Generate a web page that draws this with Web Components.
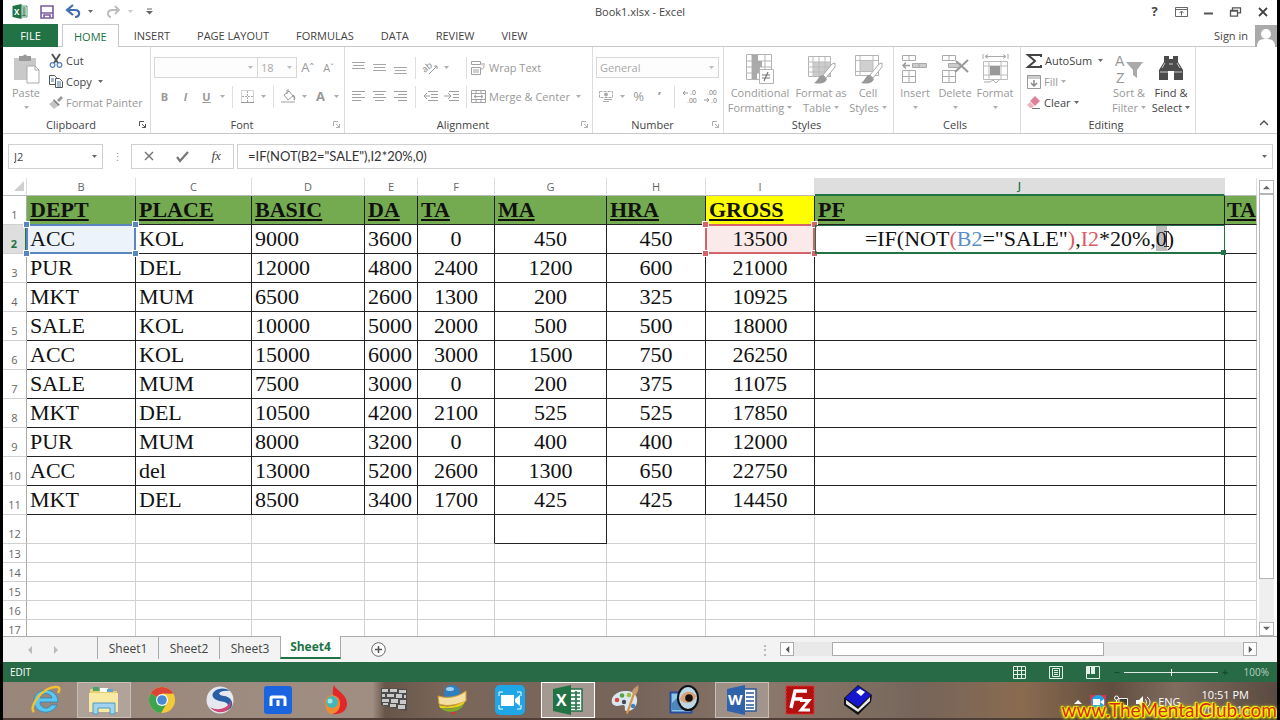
<!DOCTYPE html>
<html lang="en">
<head>
<meta charset="utf-8">
<title>Book1.xlsx - Excel</title>
<style>
	html, body { margin: 0; height: 100%; }
	body {
		background: #000;
		font: 11px/15px "Open Sans", "Noto Sans", sans-serif;
		color: #444;
		overflow: hidden;
	}
</style>
</head>
<body>
<excel-desktop></excel-desktop>

<script>
// Icon table: name -> [width, height, svg body]
const G = "#b4b4b4";
const ICONS = {
	excel: [32, 30, `<path d="M17 4h13v22H17z" fill="#fff" stroke="#217346" stroke-width="1.5"/><path d="M19 8h9M19 12h9M19 16h9M19 20h9M19 23h9M24 6v19" stroke="#217346" stroke-width="1.6"/><path d="M1 4l18-4v30L1 26z" fill="#217346"/><text x="4" y="21" font-size="16" font-weight="700" fill="#fff" font-family="Open Sans">X</text>`],
	word: [32, 30, `<path d="M17 4h13v22H17z" fill="#fff" stroke="#2b579a" stroke-width="1.5"/><path d="M20 8h8M20 12h8M20 16h8M20 20h8M20 23h8" stroke="#2b579a" stroke-width="1.4"/><path d="M1 4l18-4v30L1 26z" fill="#2f62ab"/><text x="2" y="20" font-size="15" font-weight="700" fill="#fff" font-family="Open Sans">W</text>`],
	save: [14, 14, `<path d="M1 1h12v12H1z" fill="#fff" stroke="#7b5ba0" stroke-width="1.6"/><path d="M1 8h12M4 13v-3h6v3" fill="none" stroke="#7b5ba0" stroke-width="1.6"/>`],
	undo: [15, 13, `<path d="M3 5h6c6 0 5 7 0 7" fill="none" stroke="#3e6db5" stroke-width="2.2"/><path d="M7 0L1 5l6 5" fill="none" stroke="#3e6db5" stroke-width="2.2"/>`],
	redo: [15, 13, `<path d="M12 5H7c-7 0-6 7-2 7" fill="none" stroke="#bbb" stroke-width="1.8"/><path d="M9 1l4 4-4 4" fill="none" stroke="#bbb" stroke-width="1.8"/>`],
	custom: [7, 7, `<path d="M1 1h5" stroke="#666"/><path d="M0 3h7L3.500 6.500z" fill="#666"/>`],
	caret: [5, 3, `<path d="M0 0h5L2.500 3z" fill="currentColor" opacity=".8"/>`],
	ribbonopt: [13, 10, `<path d="M.5.5h12v9H.5zM1 2.500h11" fill="none" stroke="#666"/><path d="M6.500 8.500V4.500M4.500 6l2-2 2 2" fill="none" stroke="#666"/>`],
	min: [9, 9, `<path d="M0 6.500h9" stroke="#555" stroke-width="2"/>`],
	restore: [11, 10, `<path d="M2.500 3V.8h8v5H8M.5 3.500h7v5.700h-7zM.5 4h7" fill="none" stroke="#555" stroke-width="1.300"/>`],
	close: [10, 10, `<path d="M1 1l8 8M9 1L1 9" stroke="#444" stroke-width="1.800"/>`],
	avatar: [22, 22, `<path d="M0 0h22v22H0z" fill="#aaa"/><circle cx="11" cy="9" r="5" fill="#fff"/><path d="M2 22c0-8 5-8 9-8s9 0 9 8z" fill="#fff"/>`],
	paste: [27, 30, `<path d="M1 4h22v22H1z" fill="#c9c9c9"/><path d="M6 2h12v5H6z" fill="#999"/><circle cx="12" cy="2.500" r="2" fill="#999"/><path d="M14 12h8l4 4v13H14z" fill="#fff" stroke="#aaa"/><path d="M22 12v4h4" fill="none" stroke="#aaa"/>`],
	cut: [14, 14, `<path d="M3 0l6 9M11 0L5 9" stroke="#555" stroke-width="2"/><circle cx="3.500" cy="11" r="2.300" fill="none" stroke="#5b84b8" stroke-width="1.300"/><circle cx="10.500" cy="11" r="2.300" fill="none" stroke="#5b84b8" stroke-width="1.300"/>`],
	copy: [14, 13, `<path d="M.5.5h5l2 2v7h-7z" fill="#fff" stroke="#555"/><path d="M2 4h3M2 6h3" stroke="#4674aa"/><path d="M6.500 3.500h4l3 3v6h-7z" fill="#fff" stroke="#555"/><path d="M8 7h4M8 9h4M8 11h4" stroke="#4674aa"/>`],
	painter: [14, 13, `<path d="M8 4l4-4 2 2-4 4z" fill="#999"/><path d="M5 3l6 6-2 1-5-5z" fill="#888"/><path d="M4 5l5 5-4 3-5-5z" fill="#c4c4c4"/>`],
	borders: [13, 13, `<path d="M.5.5h12v12H.5z" fill="none" stroke="#aaa" stroke-dasharray="1 1"/><path d="M6.500 1v11M1 6.500h11" stroke="#aaa" stroke-dasharray="2 1"/><path d="M0 12.500h13" stroke="#999"/>`],
	fillc: [15, 15, `<path d="M3 6l5-4 4 5-5 4zM6 5V1h2" fill="none" stroke="#999"/><path d="M12 6c2 2 2 3 1 5" stroke="#999" stroke-width="1.500" fill="none"/><path d="M0 12h14v2H0z" fill="#d0d0d0"/>`],
	top: [13, 13, `<path d="M0 1.500h13M1 4.500h11M0 7.500h13" stroke="#a6a6a6"/>`],
	mid: [13, 13, `<path d="M0 3.500h13M1 6.500h11M0 9.500h13" stroke="#a6a6a6"/>`],
	bot: [13, 13, `<path d="M0 6.500h13M1 9.500h11M0 12.500h13" stroke="#a6a6a6"/>`],
	left: [13, 11, `<path d="M0 .5h13M0 3.500h9M0 6.500h13M0 9.500h9" stroke="#a0a0a0"/>`],
	center: [13, 11, `<path d="M0 .5h13M2 3.500h9M0 6.500h13M2 9.500h9" stroke="#a0a0a0"/>`],
	right: [13, 11, `<path d="M0 .5h13M4 3.500h9M0 6.500h13M4 9.500h9" stroke="#a0a0a0"/>`],
	orient: [16, 14, `<text x="0" y="9" font-size="9" fill="#888" transform="rotate(-40 5 8)" font-family="Open Sans">ab</text><path d="M6 13l8-8M11 5h3v3" fill="none" stroke="#999"/>`],
	outdent: [15, 11, `<path d="M5 .5h10M8 3.500h7M8 6.500h7M5 9.500h10M1 5h6M4 2L1 5l3 3" fill="none" stroke="#a0a0a0"/>`],
	indent: [15, 11, `<path d="M5 .5h10M9 3.500h6M9 6.500h6M5 9.500h10M0 5h6M4 2l3 3-3 3" fill="none" stroke="#a0a0a0"/>`],
	wrap: [15, 14, `<path d="M.5.5h9v3h-9zM.5 6.500h9v7h-9zM2 9h6M2 11h6" fill="none" stroke="#a0a0a0"/><path d="M9 3h5M13 4c0 4-1 4-4 4" fill="none" stroke="#a0a0a0"/>`],
	merge: [15, 13, `<path d="M.5.5h14v12H.5zM0 3.500h15M0 9.500h15M5 1v2M10 1v2M5 10v2M10 10v2M3 6.500h9M5 5L3 6.500 5 8M10 5l2 1.500L10 8" fill="none" stroke="#a0a0a0"/>`],
	currency: [15, 13, `<path d="M.5 1.500h13v6H.5z" fill="none" stroke="#aaa" stroke-dasharray="3 1"/><circle cx="7" cy="4.500" r="2" fill="#aaa"/><path d="M5 9.500h8M4 11.500h6" stroke="#aaa"/>`],
	incdec: [14, 13, `<path d="M0 3h5M2 1L0 3l2 2" fill="none" stroke="#999"/><text x="7" y="5" font-size="7" fill="#777" font-family="Liberation Sans">.0</text><text x="4" y="13" font-size="7" fill="#777" font-family="Liberation Sans">.00</text>`],
	decdec: [14, 13, `<path d="M0 10h5M3 8l2 2-2 2" fill="none" stroke="#999"/><text x="3" y="5" font-size="7" fill="#777" font-family="Liberation Sans">.00</text><text x="7" y="13" font-size="7" fill="#777" font-family="Liberation Sans">.0</text>`],
	cond: [28, 30, `<path d="M.5.5h25v25H.5zM.5 7h25M.5 13h25M.5 19h25M6 1v25M19 1v25" fill="#fff" stroke="${G}"/><path d="M6 1h6v6H6zM6 7h10v6H6zM6 13h8v6H6zM6 19h5v6H6z" fill="#aaa"/><path d="M13.500 15.500h14v14h-14z" fill="#fff" stroke="${G}"/><path d="M16 21h8M16 24h8M22 18l-4 9" stroke="#777" stroke-width="1.200"/>`],
	fmttable: [29, 30, `<path d="M1.500 2.500h22v20h-22z" fill="#fff" stroke="${G}"/><path d="M6 8h17v14H6z" fill="#ccc"/><path d="M1 8h23M1 13h23M1 18h23M6 3v20M12 3v20M18 3v20" stroke="#bbb"/><path d="M28 9l-3 1-9 11 3 3 9-11z" fill="#fff" stroke="#aaa"/><path d="M15 21l5 4c-2 5-7 5-13 4 4-2 4-7 8-8z" fill="#999"/>`],
	cellstyle: [29, 30, `<path d="M1.500 1.500h23v20h-23z" fill="#fff" stroke="${G}"/><path d="M6 7h13v10H6z" fill="#d0d0d0"/><path d="M1 6.500h23M1 17.500h23M6 2v20M19 2v20" stroke="#bbb"/><path d="M28 9l-3 1-9 11 3 3 9-11z" fill="#fff" stroke="#aaa"/><path d="M15 21l5 4c-2 5-7 5-13 4 4-2 4-7 8-8z" fill="#999"/>`],
	insert: [26, 30, `<path d="M.5 1.500h13v5H.5zM7 2v5M.5 16.500h13v12H.5zM.5 22.500h13M7 17v11" fill="#fff" stroke="#aaa"/><path d="M10.500 9.500h14v4h-14zM17 10v4" fill="#ccc" stroke="#aaa"/><path d="M1 11.500h7M4 8.500l-3 3 3 3" fill="none" stroke="#999" stroke-width="1.500"/>`],
	delete: [27, 30, `<path d="M.5 1.500h13v5H.5zM7 2v5M.5 16.500h13v12H.5zM.5 22.500h13M7 17v11" fill="#fff" stroke="#aaa"/><path d="M6.500 9.500h12v4h-12z" fill="#ccc" stroke="#aaa"/><path d="M14 7l12 11M26 6L13 18" stroke="#999" stroke-width="2"/>`],
	format: [27, 30, `<path d="M1 0v5M26 0v5M3 2.500h21M6 .5l-3 2 3 2M21 .5l3 2-3 2" fill="none" stroke="#aaa"/><path d="M1.500 7.500h24v18h-24zM1 12h24M1 21h24M7 8v17M19 8v17" fill="#fff" stroke="#bbb"/><path d="M8 12h10v9H8z" fill="#999"/><path d="M2 28h6l3-2 3 3 3-3" fill="none" stroke="#aaa"/>`],
	sum: [15, 14, `<path d="M14 3V1H1l7 6-7 6h13v-2" fill="none" stroke="#444" stroke-width="2"/>`],
	fill: [14, 14, `<path d="M.5.5h13v13H.5z" fill="#fff" stroke="#999"/><path d="M1 1h12v3H1z" fill="#ccc"/><path d="M7 5v6M4 8l3 3 3-3" fill="none" stroke="#888" stroke-width="1.500"/>`],
	clear: [14, 13, `<path d="M8 0l5 5-5 5-5-5z" fill="#e0819a"/><path d="M3 6l4 4-2 2H3L0 9z" fill="#efb3c0"/><path d="M5 12.500h8" stroke="#777"/>`],
	sort: [28, 30, `<text x="0" y="12" font-size="14" fill="#999" font-family="Liberation Sans">A</text><text x="1" y="29" font-size="14" fill="#999" font-family="Liberation Sans">Z</text><path d="M11 8h17l-6 8v8l-4-3v-5z" fill="#aaa"/>`],
	find: [26, 28, `<path d="M6 2h5v3h4V2h5v6l5 8v10h-9v-9h-6v9H1V16l5-8z" fill="#4b4b4b"/><path d="M2 18h8M16 18h8M4 14l3-5M22 14l-3-5M11 10h4" stroke="#ccc"/>`],
	launch: [7, 7, `<path d="M.5 5V.5H5M3 3l3.500 3.500M6.500 3v3.500H3" fill="none" stroke="currentColor"/>`],
	up: [8, 5, `<path d="M0 5l4-4 4 4" fill="none" stroke="#555" stroke-width="1.500"/>`],
	cancel: [10, 10, `<path d="M1 1l8 8M9 1L1 9" stroke="#777" stroke-width="1.500"/>`],
	ok: [13, 11, `<path d="M1 6l3 4 8-9" fill="none" stroke="#777" stroke-width="2.200"/>`],
	tri: [8, 8, `<path d="M4 2l4 4H0z" fill="currentColor"/>`],
	plus: [15, 15, `<circle cx="7.500" cy="7.500" r="6.800" fill="#fff" stroke="#666"/><path d="M7.500 4v7M4 7.500h7" stroke="#555" stroke-width="1.500"/>`],
	corner: [10, 10, `<path d="M10 0v10H0z" fill="#d0d0d0"/>`],
	normal: [13, 13, `<path d="M.5.5h12v12H.5zM0 4.500h13M0 8.500h13M4.500 0v13M8.500 0v13" fill="none" stroke="#e4efe8"/>`],
	layout: [14, 13, `<path d="M.5.5h13v12H.5zM3.500 2.500h7v8h-7zM5 4.500h4M5 6.500h4M5 8.500h4" fill="none" stroke="#e4efe8"/>`],
	breaks: [14, 13, `<path d="M.5.5h13v12H.5z" fill="none" stroke="#e4efe8"/><path d="M1 1h3v7H1zM5 1h4v7H5z" fill="#e4efe8"/>`],
	ie: [30, 30, `<path d="M27 17H9c0 7 9 8 11 3h6C21 31 3 29 3 16 3 2 27 1 27 17zM9 13h12c-1-6-11-6-12 0z" fill="#5cc5f0" stroke="#2a86bd" stroke-width=".8"/><path d="M3 27C-3 22 12 1 26 2c3 0 3 3 1 6" fill="none" stroke="#f2c230" stroke-width="2.400"/>`],
	folder: [32, 28, `<path d="M2 3h8l1 2h18v21H2z" fill="#e9cf74"/><path d="M5 1h6v4H5z" fill="#4aa564"/><path d="M12 2h8v4h-8z" fill="#fff"/><path d="M19 3h6v3h-6z" fill="#61a5d6"/><path d="M1 7h29v19H1z" fill="#f8e9a4"/><path d="M5 28V17h22v11h-5v-6H10v6z" fill="#9fd3ef" stroke="#5599bd"/>`],
	chrome: [28, 28, `<circle cx="14" cy="14" r="13" fill="#f5ca3a"/><path d="M14 14L2.700 7.500A13 13 0 0 1 25.300 7.500H14z" fill="#dc4436"/><path d="M2.700 7.500A13 13 0 0 0 13 27l6-10-5-3z" fill="#3fa450"/><path d="M14 7.500h11.300L22 8z" fill="#dc4436"/><circle cx="14" cy="14" r="6" fill="#fff"/><circle cx="14" cy="14" r="4.800" fill="#4a8ad4"/>`],
	swirl: [28, 28, `<circle cx="14" cy="14" r="13.500" fill="#e6e8ef"/><path d="M24 5C16-1 4 5 7 11s16 3 15 9c-1 3-4 5-7 5 15 1 14-14 3-15-8-1-6-6 6-5z" fill="#2b5fa5"/><path d="M4 21c8 5 19 1 21-7 2 12-13 17-21 7z" fill="#cf4672"/>`],
	maxthon: [28, 28, `<rect width="28" height="28" rx="3" fill="#1b64e0"/><path d="M7 20v-8q0-1 1-1h11q2 0 2 2v7M14 14v6" fill="none" stroke="#fff" stroke-width="3"/>`],
	flame: [26, 30, `<path d="M11 0c2 6 14 9 13 20-1 8-10 10-15 9 8-2 9-9 5-13C9 11 9 6 11 0z" fill="#e2262a"/><path d="M2 17c0-9 14-9 15 0 1 8-5 12-9 12-4-1-6-6-6-12z" fill="#f08a2c"/><circle cx="9" cy="17" r="6" fill="#45b6b8"/><circle cx="7" cy="16" r="2.500" fill="#a9e5df"/>`],
	bricks: [28, 24, `<path d="M1 0l26 1v22L1 17z" fill="#4d4d4d"/><path d="M2 1h6v3H2zM10 1h7v3h-7zM19 2h7v3h-7zM2 6h3v3H2zM7 6h7v3H7zM16 6h6v4h-6zM24 7h2v3h-2zM2 11h7v3H2zM11 11h7v4h-7zM20 12h6v4h-6zM3 15h5v2H3zM10 16h6v3h-6zM18 17h7v4h-7z" fill="#c9c9c9"/>`],
	globe: [30, 30, `<circle cx="15" cy="8" r="8" fill="#2e7fc0"/><ellipse cx="13" cy="4" rx="4" ry="2" fill="#9fd2f3"/><path d="M1 11c10 3 20 1 28-5v10c-9 4-19 6-27 3z" fill="#f3dfa4" stroke="#d29b30"/><path d="M2 20c9 3 17 1 26-4-1 6-11 8-25 7z" fill="#e7d11c"/><path d="M4 23c8 2 17 0 23-4-4 9-18 10-23 4z" fill="#7fae28"/><path d="M14 27h5l-3 3z" fill="#d33"/>`],
	camera: [30, 30, `<rect width="30" height="30" rx="5" fill="#1fa6e6"/><path d="M6 10h13v11H6zM20 14l5-4v11l-5-4z" fill="#fff"/><path d="M4 11V7h4M22 7h4v4M4 20v4h4M22 24h4v-4" fill="none" stroke="#fff"/>`],
	paint: [30, 30, `<path d="M14 6c9-1 13 5 12 11-1 7-8 10-11 9-3-2 1-5-3-6-3 0-8 3-11-2C-1 12 6 6 14 6z" fill="#dbe7f0"/><circle cx="6" cy="15" r="2.300" fill="#d64b3c"/><circle cx="11" cy="10.500" r="2.300" fill="#5aa245"/><circle cx="18" cy="10" r="2.300" fill="#9bc13c"/><circle cx="13" cy="17" r="2.200" fill="#444d55"/><circle cx="22" cy="21" r="2.200" fill="#3b82c4"/><path d="M22 8l2 1-7 20-2-1z" fill="#d89443"/><path d="M21 8c0-4 3-5 6-8 1 4 0 8-3 10z" fill="#c7986a"/>`],
	eye: [30, 30, `<path d="M1.500 7.500h21v20h-21z" fill="#8cc8e8" stroke="#2c4b9a" stroke-width="2"/><path d="M3 18l7-7 6 14H3z" fill="#4b86bd"/><ellipse cx="19" cy="13" rx="10" ry="12" fill="#bcd8e8" stroke="#111" stroke-width="2"/><path d="M11 14c2-8 12-10 16-3-1 7-12 10-16 3z" fill="#d9a176"/><circle cx="20" cy="13" r="3.800" fill="#17110c"/>`],
	fz: [30, 30, `<path d="M1 1h28v28H1z" fill="#b3100f" stroke="#d33" stroke-width="1.500" stroke-dasharray="2 1.500"/><path d="M6 23L10 6h12M8.500 14h9" fill="none" stroke="#fff" stroke-width="3.400"/><path d="M15 15.500h9L16 25h9" fill="none" stroke="#fff" stroke-width="2.800"/>`],
	book: [32, 32, `<path d="M2 14L16 1l14 10-1 7-13 13L2 21z" fill="#111"/><path d="M3 14L16 2l13 9-13 12z" fill="#1616cf"/><path d="M4 16l12 9 12-12v4L16 28 4 20z" fill="#e8e8e8"/><path d="M14 8l4-3 5 3-4 4z" fill="#fff"/>`],
	traycam: [16, 14, `<path d="M0 0h16v12H0z" fill="#d63450"/><circle cx="8" cy="7" r="7" fill="#1fa6e6"/><path d="M3 4h7v6H3zM10 7l4-3v6z" fill="#fff"/>`],
	traynet: [14, 14, `<path d="M5 3.500h8.500v7H5zM7 13h5" fill="#3d3733" stroke="#eee"/><circle cx="2.500" cy="3" r="2" fill="none" stroke="#fff"/><path d="M2.500 5v6" stroke="#fff"/>`],
	sound: [14, 12, `<path d="M0 4h3l4-4v12L3 8H0z" fill="#fff"/><path d="M9 3c2 2 2 4 0 6M11 1c4 3 4 7 0 10" fill="none" stroke="#fff"/>`],
};

// Every element below only differs in its markup, so they share this base
class XlElement extends HTMLElement {
	connectedCallback() {
		if (this.shadowRoot) return;
		const root = this.attachShadow({ mode: "open" });
		root.innerHTML = `<style>
			*, ::before { box-sizing: border-box; }
			button, input, select { font: inherit; color: inherit; margin: 0; padding: 0; border: 0; background: none; border-radius: 0; }
			button { cursor: pointer; white-space: nowrap; }
		</style>${this.template()}`;
	}
}

// <xl-icon name="save" size="14"> - size is an optional width in px
class XlIcon extends XlElement {
	template() {
		const [w, h, body] = ICONS[this.getAttribute("name")];
		const width = parseInt(this.getAttribute("size")) || w;
		const height = Math.round((h * width) / w);
		return `<style>:host { display: inline-flex; flex: none; } svg { display: block; overflow: visible; }</style>
			<svg width="${width}" height="${height}" viewBox="0 0 ${w} ${h}" aria-hidden="true">${body}</svg>`;
	}
}

class TitleBar extends XlElement {
	template() {
		return `<style>
			:host { display: grid; grid-template-columns: 1fr auto 1fr; align-items: center; height: 23px; margin-bottom: 1px; background: #fff; box-shadow: 0 1px #fff; }
			.quick { display: flex; align-items: center; padding-left: 9px; }
			.quick button { display: flex; margin-right: 12px; }
			.quick .drop { width: 13px; margin: 0 9px 0 -9px; justify-content: center; }
			.window { display: flex; justify-content: flex-end; padding-right: 1px; }
			.window button { width: 27px; height: 20px; display: flex; align-items: center; justify-content: center; font-weight: 700; font-size: 13px; }
		</style>
		<div class="quick">
			<button aria-label="Excel"><xl-icon name="excel" size="16"></xl-icon></button>
			<button aria-label="Save"><xl-icon name="save"></xl-icon></button>
			<button aria-label="Undo"><xl-icon name="undo"></xl-icon></button>
			<button class="drop" aria-label="Undo list"><xl-icon name="caret"></xl-icon></button>
			<button aria-label="Redo"><xl-icon name="redo"></xl-icon></button>
			<button class="drop" aria-label="Redo list" style="color:#bbb"><xl-icon name="caret"></xl-icon></button>
			<button aria-label="Customize"><xl-icon name="custom"></xl-icon></button>
		</div>
		<span>Book1.xlsx - Excel</span>
		<div class="window">
			<button>?</button>
			<button aria-label="Ribbon display"><xl-icon name="ribbonopt"></xl-icon></button>
			<button aria-label="Minimize"><xl-icon name="min"></xl-icon></button>
			<button aria-label="Restore"><xl-icon name="restore"></xl-icon></button>
			<button aria-label="Close"><xl-icon name="close"></xl-icon></button>
		</div>`;
	}
}

class RibbonTabs extends XlElement {
	template() {
		const tabs = ["INSERT", "PAGE LAYOUT", "FORMULAS", "DATA", "REVIEW", "VIEW"];
		return `<style>
			:host { display: flex; gap: 1px; height: 23px; background: #fff; box-shadow: inset 0 -1px #c8c8c8; }
			button { padding: 0 13px; }
			.file { width: 55px; background: #217346; color: #fff; margin-right: 3px; }
			.home { padding: 0 11px; color: #217346; border: 1px solid #c8c8c8; border-bottom: 0; background: #fff; margin-right: 1px; }
			.sign { margin-left: auto; padding: 0 6px 0 0; }
			xl-icon { align-self: flex-end; }
		</style>
		<button class="file">FILE</button>
		<button class="home">HOME</button>
		${tabs.map((t) => `<button>${t}</button>`).join("")}
		<button class="sign">Sign in</button>
		<xl-icon name="avatar"></xl-icon>`;
	}
}

// <ribbon-group label="Font" launcher="on|off">
class RibbonGroup extends XlElement {
	template() {
		const launcher = this.getAttribute("launcher");
		const color = launcher === "on" ? "#555" : "#b0b0b0";
		return `<style>
			:host { display: flex; flex-direction: column; border-right: 1px solid #dcdcdc; padding-top: 3px; min-width: 0; }
			.body { height: 66px; display: flex; }
			footer { display: flex; align-items: center; height: 17px; padding-right: 4px; }
			footer span { flex: 1; text-align: center; }
			footer button { display: flex; color: ${color}; }
		</style>
		<div class="body"><slot></slot></div>
		<footer><span>${this.getAttribute("label")}</span>
			${launcher ? `<button aria-label="${this.getAttribute("label")} settings"><xl-icon name="launch"></xl-icon></button>` : ""}
		</footer>`;
	}
}

// <big-button icon="paste" line1="Paste" line2="">
class BigButton extends XlElement {
	template() {
		const line2 = this.getAttribute("line2") || "";
		return `<style>
			:host { display: flex; color: #999; }
			:host([live]) { color: #444; }
			button { width: 100%; display: flex; flex-direction: column; align-items: center; padding-top: 4px; }
			.pic { height: 31px; }
			.row { display: flex; align-items: center; gap: 3px; height: 15px; }
		</style>
		<button><span class="pic"><xl-icon name="${this.getAttribute("icon")}"></xl-icon></span>
			<span class="row">${this.getAttribute("line1")}</span>
			<span class="row">${line2}<xl-icon name="caret"></xl-icon></span>
		</button>`;
	}
}

// <tool-button icon="copy" drop>Copy</tool-button>
class ToolButton extends XlElement {
	template() {
		const icon = this.getAttribute("icon");
		return `<style>
			:host { display: flex; align-items: center; color: #999; }
			:host([live]) { color: #444; }
			button { display: flex; align-items: center; height: 20px; }
			.icon { min-width: 21px; justify-content: center; }
			.text { gap: 3px; }
			.drop { width: 11px; justify-content: center; }
		</style>
		<button class="${this.hasAttribute("text") ? "text" : "icon"}" aria-label="${this.getAttribute("name") || this.textContent || icon}">
			${icon ? `<xl-icon name="${icon}"></xl-icon>` : ""}<slot></slot>
		</button>
		${this.hasAttribute("drop") ? `<button class="drop" aria-label="More"><xl-icon name="caret"></xl-icon></button>` : ""}`;
	}
}

// <drop-box label="Font size" value="18">
class DropBox extends XlElement {
	template() {
		return `<style>
			:host { display: grid; height: 21px; border: 1px solid #d8d8d8; align-items: center; color: #aaa; background: #fdfdfd; }
			select, xl-icon { grid-area: 1 / 1; }
			select { appearance: none; width: 100%; height: 100%; padding-left: 3px; }
			xl-icon { justify-self: end; margin-right: 4px; pointer-events: none; }
		</style>
		<select aria-label="${this.getAttribute("label")}"><option>${this.getAttribute("value") || ""}</option></select>
		<xl-icon name="caret"></xl-icon>`;
	}
}

class RibbonBar extends XlElement {
	template() {
		return `<style>
			:host { display: grid; grid-template-columns: 148px 194px 248px 131px 170px 127px 175px 1fr; height: 87px; background: #fff; border-bottom: 1px solid #c8c8c8; box-sizing: border-box; }
			.list { display: grid; grid-template-rows: repeat(3, 21px); align-content: start; }
			.rows { display: grid; grid-template-rows: 29px 29px; padding: 3px; }
			.row { display: flex; align-items: center; }
			.align { grid-template-columns: 63px 9px 42px 9px auto; }
			hr { width: 1px; height: 22px; margin: 0 4px; border: 0; background: #dedede; }
			.large { width: 46px; }
			.a { font-size: 13px; }
			.collapse { align-self: end; justify-self: end; padding: 0 9px 5px 0; }
		</style>
		<ribbon-group label="Clipboard" launcher="on">
			<big-button class="large" icon="paste" line1="Paste"></big-button>
			<div class="list">
				<tool-button live text icon="cut">Cut</tool-button>
				<tool-button live text icon="copy" drop>Copy&nbsp;</tool-button>
				<tool-button text icon="painter">Format Painter</tool-button>
			</div>
		</ribbon-group>
		<ribbon-group label="Font" launcher="off">
			<div class="rows">
				<div class="row">
					<drop-box label="Font" style="width:104px"></drop-box>
					<drop-box label="Font size" value="18" style="width:40px;margin-left:-1px"></drop-box>
					<tool-button class="a" name="Grow font">A<small>ˆ</small></tool-button>
					<tool-button name="Shrink font">A<small>ˇ</small></tool-button>
				</div>
				<div class="row">
					<tool-button><b>B</b></tool-button><tool-button><b><i>I</i></b></tool-button><tool-button drop><b><u>U</u></b></tool-button>
					<hr><tool-button icon="borders" drop></tool-button>
					<hr><tool-button icon="fillc" drop></tool-button><tool-button class="a" drop><b>A</b></tool-button>
				</div>
			</div>
		</ribbon-group>
		<ribbon-group label="Alignment" launcher="off">
			<div class="rows align">
				<div class="row"><tool-button icon="top"></tool-button><tool-button icon="mid"></tool-button><tool-button icon="bot"></tool-button></div>
				<div class="row"><hr></div>
				<div class="row"><tool-button icon="orient" drop></tool-button></div>
				<div class="row"><hr></div>
				<div class="row"><tool-button text icon="wrap">Wrap Text</tool-button></div>
				<div class="row"><tool-button icon="left"></tool-button><tool-button icon="center"></tool-button><tool-button icon="right"></tool-button></div>
				<div class="row"><hr></div>
				<div class="row"><tool-button icon="outdent"></tool-button><tool-button icon="indent"></tool-button></div>
				<div class="row"><hr></div>
				<div class="row"><tool-button text icon="merge" drop>Merge &amp; Center&nbsp;</tool-button></div>
			</div>
		</ribbon-group>
		<ribbon-group label="Number" launcher="off">
			<div class="rows">
				<drop-box label="Number format" value="General" style="width:123px;align-self:center"></drop-box>
				<div class="row">
					<tool-button icon="currency" drop></tool-button><tool-button class="a">%</tool-button><tool-button class="a"><b>’</b></tool-button>
					<hr><tool-button icon="incdec"></tool-button><tool-button icon="decdec"></tool-button>
				</div>
			</div>
		</ribbon-group>
		<ribbon-group label="Styles">
			<big-button icon="cond" line1="Conditional" line2="Formatting" style="width:72px"></big-button>
			<big-button icon="fmttable" line1="Format as" line2="Table" style="width:50px"></big-button>
			<big-button icon="cellstyle" line1="Cell" line2="Styles" style="width:44px"></big-button>
		</ribbon-group>
		<ribbon-group label="Cells">
			<big-button icon="insert" line1="Insert" style="width:42px"></big-button>
			<big-button icon="delete" line1="Delete" style="width:38px"></big-button>
			<big-button icon="format" line1="Format" style="width:42px"></big-button>
		</ribbon-group>
		<ribbon-group label="Editing">
			<div class="list" style="width:84px;padding-left:6px">
				<tool-button live text icon="sum" drop>AutoSum&nbsp;</tool-button>
				<tool-button text icon="fill" drop>Fill</tool-button>
				<tool-button live text icon="clear" drop>Clear</tool-button>
			</div>
			<big-button icon="sort" line1="Sort &amp;" line2="Filter" style="width:48px"></big-button>
			<big-button live icon="find" line1="Find &amp;" line2="Select" style="width:36px"></big-button>
		</ribbon-group>
		<button class="collapse" aria-label="Collapse ribbon"><xl-icon name="up"></xl-icon></button>`;
	}
}

class FormulaBar extends XlElement {
	template() {
		return `<style>
			:host { display: flex; align-items: center; height: 44px; padding: 0 4px 0 5px; background: #fff; }
			.box { display: flex; align-items: center; height: 25px; border: 1px solid #d0d0d0; }
			.name { width: 95px; padding: 0 5px; }
			.name input { width: 100%; min-width: 0; }
			.dots { width: 28px; text-align: center; color: #999; }
			.tools { width: 103px; justify-content: space-around; }
			.tools button { display: flex; width: 28px; justify-content: center; }
			.fx { font: italic 13px "Liberation Serif", serif; }
			.formula { flex: 1; margin-left: 3px; padding: 0 5px 0 10px; }
			.formula input { flex: 1; color: #333; font: 13px Lato, sans-serif; }
			input { outline: 0; }
		</style>
		<div class="box name"><input aria-label="Name box" value="J2"><xl-icon name="caret"></xl-icon></div>
		<span class="dots">⋮</span>
		<div class="box tools">
			<button aria-label="Cancel"><xl-icon name="cancel"></xl-icon></button>
			<button aria-label="Enter"><xl-icon name="ok"></xl-icon></button>
			<button class="fx">fx</button>
		</div>
		<div class="box formula"><input aria-label="Formula" value='=IF(NOT(B2="SALE"),I2*20%,0)'><xl-icon name="caret"></xl-icon></div>`;
	}
}

class SheetGrid extends XlElement {
	template() {
		const cols = { B: 109, C: 116, D: 113, E: 53, F: 77, G: 112, H: 99, I: 109, J: 410 };
		const letters = Object.keys(cols);
		const heads = ["DEPT", "PLACE", "BASIC", "DA", "TA", "MA", "HRA", "GROSS", "PF", "TA"];
		const data = [
			["ACC", "KOL", 9000, 3600, 0, 450, 450, 13500],
			["PUR", "DEL", 12000, 4800, 2400, 1200, 600, 21000],
			["MKT", "MUM", 6500, 2600, 1300, 200, 325, 10925],
			["SALE", "KOL", 10000, 5000, 2000, 500, 500, 18000],
			["ACC", "KOL", 15000, 6000, 3000, 1500, 750, 26250],
			["SALE", "MUM", 7500, 3000, 0, 200, 375, 11075],
			["MKT", "DEL", 10500, 4200, 2100, 525, 525, 17850],
			["PUR", "MUM", 8000, 3200, 0, 400, 400, 12000],
			["ACC", "del", 13000, 5200, 2600, 1300, 650, 22750],
			["MKT", "DEL", 8500, 3400, 1700, 425, 425, 14450],
		];
		const formula = `<span class="edit">=IF(NOT<i class="red">(</i><i class="blue">B2</i>="SALE"<i class="red">)</i>,<i class="red">I2</i>*20%,<mark>0</mark>)</span>`;
		const marks = "<s></s><s></s><s></s><s></s>";

		let rows = `<tr class="head">${heads.map((h, i) => `<td class="h${i}">${h}</td>`).join("")}</tr>`;
		data.forEach((r, n) => {
			const cells = [...r, n ? "" : formula, ""];
			rows += `<tr class="data">${cells
				.map((v, i) => {
					const ref = !n && i === 0 ? " ref bref" : !n && i === 7 ? " ref rref" : !n && i === 8 ? " active" : "";
					return `<td class="${i > 3 ? "mid" : ""}${ref}">${v}${ref && i < 8 ? marks : ""}</td>`;
				})
				.join("")}</tr>`;
		});
		for (let n = 12; n < 18; n++) {
			rows += `<tr class="${n === 12 ? "r12" : "empty"}">${"<td></td>".repeat(10)}</tr>`;
		}
		// put the row numbers in front of each row
		let n = 0;
		rows = rows.replace(/<tr class="(\w+)">/g, (m) => `${m}<th${++n === 2 ? ' class="on"' : ""}>${n}</th>`);

		return `<style>
			:host { display: grid; grid-template-columns: 1fr 20px; grid-template-rows: minmax(0, 1fr); min-height: 0; background: #fff; }
			.view { overflow: hidden; min-height: 0; }
			table { width: 100%; table-layout: fixed; border-collapse: separate; border-spacing: 0; font: 22px/24px "Liberation Serif", serif; color: #111; }
			th, td { padding: 0 3px; border: solid #d0d0d0; border-width: 0 1px 1px 0; height: 29px; white-space: nowrap; text-align: left; overflow: hidden; }
			th { font: 11px/14px "Open Sans", sans-serif; color: #666; text-align: center; vertical-align: bottom; padding: 0 0 2px; }
			thead th { height: 18px; border-bottom-color: #bbb; vertical-align: middle; padding: 0; border-right-color: #ddd; }
			thead th.on { background: #dedede; color: #217346; border-bottom: 2px solid #217346; font-weight: 600; }
			tbody th { border-right-color: #ababab; }
			tbody th.on { background: #dedede; color: #217346; font-weight: 700; border-right: 2px solid #217346; }
			.data td, .head td { border-color: #222; }
			.data td:last-child, .head td:last-child { border-right-color: #c0c0c0; }
			.head td { background: #74ab50; font-weight: 700; text-decoration: underline; }
			.head .h7 { background: #ff0; }
			.head td:last-child { padding-left: 2px; }
			.mid { text-align: center; }
			.empty th, .empty td { height: 19px; }
			.empty th { padding: 0 0 1px; }
			.r12 td:nth-child(6), .r12 td:nth-child(7) { border-right-color: #222; }
			.r12 td:nth-child(7) { border-bottom-color: #222; }
			.ref { position: relative; overflow: visible; }
			.ref::before { content: ""; position: absolute; inset: -1px; border: 2px solid var(--c); }
			.bref { --c: #5b85bd; background: #edf3fb; }
			.rref { --c: #d3656a; background: #faeaea; }
			s { position: absolute; width: 5px; height: 5px; background: var(--c); outline: 1px solid #fff; }
			s:nth-of-type(1) { left: -3px; top: -3px; }
			s:nth-of-type(2) { right: -3px; top: -3px; }
			s:nth-of-type(3) { left: -3px; bottom: -3px; }
			s:nth-of-type(4) { right: -3px; bottom: -3px; }
			.data .active { position: relative; overflow: visible; box-shadow: inset 0 1px #217346, inset 1px 0 #217346; border: solid #217346; border-width: 0 1px 2px 0; }
			.active::before { content: ""; position: absolute; right: -2px; bottom: -3px; width: 5px; height: 5px; background: #217346; }
			i { font-style: normal; }
			.blue { color: #5b8fc9; }
			.red { color: #dc5a62; }
			mark { position: relative; background: #bdbdbd; color: inherit; }
			/* text cursor over the selected argument */
			mark::before { content: ""; position: absolute; right: -2px; top: 5px; width: 5px; height: 16px; border: solid #333; border-width: 1px 0; background: linear-gradient(#333, #333) center / 1px 100% no-repeat; }
			.scroll { display: flex; flex-direction: column; padding: 2px 3px 0 2px; background: #fff; }
			.scroll button { height: 14px; border: 1px solid #b5b5b5; display: flex; align-items: center; justify-content: center; color: #666; background: #fff; }
			.track { flex: 1; background: #efefef; }
			.thumb { height: 90%; border: 1px solid #b5b5b5; background: #fff; }
			.down { rotate: 180deg; }
			.corner { padding: 0 0 0 8px; }
		</style>
		<div class="view"><table>
			<colgroup><col style="width:24px">${letters.map((l) => `<col style="width:${cols[l]}px">`).join("")}<col></colgroup>
			<thead><tr><th class="corner"><xl-icon name="corner"></xl-icon></th>${letters.map((l) => `<th class="${l === "J" ? "on" : ""}">${l}</th>`).join("")}<th></th></tr></thead>
			<tbody>${rows}</tbody>
		</table></div>
		<div class="scroll">
			<button aria-label="Scroll up"><xl-icon name="tri" size="7"></xl-icon></button>
			<div class="track"><div class="thumb"></div></div>
			<button class="down" aria-label="Scroll down"><xl-icon name="tri" size="7"></xl-icon></button>
		</div>`;
	}
}

class SheetTabs extends XlElement {
	template() {
		return `<style>
			:host { display: flex; height: 26px; background: #f3f3f3; border-top: 1px solid #ababab; padding-right: 20px; font-size: 12px; box-sizing: border-box; }
			.nav { display: flex; align-items: center; width: 94px; padding-left: 23px; gap: 18px; color: #bbb; }
			.nav button { display: flex; }
			.l { rotate: -90deg; } .r { rotate: 90deg; }
			.tab { width: 61px; height: 22px; border-left: 1px solid #ababab; }
			.on { background: #fff; color: #217346; font-weight: 700; border-bottom: 2px solid #217346; border-right: 1px solid #ababab; margin-top: -1px; height: 23px; }
			.add { display: flex; align-items: center; margin-left: 30px; height: 24px; }
			.dots { margin-left: auto; color: #999; width: 30px; align-self: center; text-align: center; }
			.scroll { display: flex; width: 38%; height: 14px; margin-top: 5px; background: #e9e9e9; }
			.scroll button { flex: none; width: 14px; display: flex; align-items: center; justify-content: center; border: 1px solid #ababab; background: #fff; color: #555; }
			.thumb { width: 57%; margin: 0 auto 0 38px; border: 1px solid #ababab; background: #fff; }
		</style>
		<div class="nav">
			<button class="l" aria-label="Previous sheet"><xl-icon name="tri"></xl-icon></button>
			<button class="r" aria-label="Next sheet"><xl-icon name="tri"></xl-icon></button>
		</div>
		<button class="tab">Sheet1</button><button class="tab">Sheet2</button><button class="tab">Sheet3</button><button class="tab on">Sheet4</button>
		<button class="add" aria-label="New sheet"><xl-icon name="plus"></xl-icon></button>
		<span class="dots">⋮</span>
		<div class="scroll">
			<button aria-label="Scroll left"><xl-icon class="l" name="tri" size="7"></xl-icon></button>
			<div class="thumb"></div>
			<button aria-label="Scroll right"><xl-icon class="r" name="tri" size="7"></xl-icon></button>
		</div>`;
	}
}

class StatusBar extends XlElement {
	template() {
		return `<style>
			:host { display: flex; align-items: center; height: 20px; background: #276a45; color: #fff; padding: 0 8px 0 7px; font-size: 10px; }
			.views { display: flex; gap: 23px; margin-left: auto; }
			.views button { display: flex; }
			.sign { width: 14px; color: #124a2a; font-weight: 700; }
			.views + .sign { margin-left: 10px; }
			input { appearance: none; width: 94px; height: 9px; background: linear-gradient(#dfe9e3, #dfe9e3) center / 100% 1px no-repeat; }
			input::-webkit-slider-thumb { appearance: none; width: 1px; height: 7px; background: #fff; }
			.pct { width: 37px; text-align: right; color: #b9d2c3; }
		</style>
		<span>EDIT</span>
		<div class="views">
			<button aria-label="Normal"><xl-icon name="normal"></xl-icon></button>
			<button aria-label="Page layout"><xl-icon name="layout"></xl-icon></button>
			<button aria-label="Page breaks"><xl-icon name="breaks"></xl-icon></button>
		</div>
		<button class="sign">−</button>
		<input type="range" aria-label="Zoom" value="50">
		<button class="sign">+</button>
		<span class="pct">100%</span>`;
	}
}

class TaskBar extends XlElement {
	template() {
		const apps = ["ie", "folder", "chrome", "swirl", "maxthon", "flame", "bricks", "globe", "camera", "excel", "paint", "eye", "word", "fz", "book"];
		const open = { folder: "open", excel: "open front", word: "open" };
		return `<style>
			:host { display: flex; align-items: center; height: 38px; padding-left: 14px; color: #fff; position: relative; border-bottom: 2px solid #4f3f37; box-sizing: border-box;
				background: linear-gradient(90deg, #98867a, #a08e82 29%, #68554a 30%, #7b675a 35%, #77645a 50%, #8b786c 60%, #7d6c60 68%, #76655a 72%, #8a6b50 80%, #614d40 87%, #806c5f 92%, #5a4a40); }
			.app { width: 58px; height: 36px; display: flex; align-items: center; justify-content: center; padding: 0 2px; }
			.app span { display: flex; align-items: center; justify-content: center; width: 54px; height: 36px; border: 1px solid transparent; }
			.open span { border-color: #c9beb6; background: #ffffff38; }
			.front span { border-color: #fff; background: #ffffff55; }
			.tray { display: flex; align-items: center; margin-left: auto; gap: 8px; padding-right: 28px; padding-top: 3px; }
			.clock { text-align: right; line-height: 15px; font-size: 11px; padding-left: 2px; }
			.mark { position: absolute; right: 0; bottom: -2px; font: 19px/20px Lato, sans-serif; color: #d8281a; text-decoration: none;
				text-shadow: 0 0 2px #ff0, 0 0 2px #ff0, 1px 1px 1px #ff0, -1px -1px 1px #ff0, 0 2px 3px #ff0, 0 0 4px #ff0; }
		</style>
		${apps.map((a) => `<button class="app ${open[a] || ""}" aria-label="${a}"><span><xl-icon name="${a}"></xl-icon></span></button>`).join("")}
		<div class="tray">
			<xl-icon name="tri"></xl-icon><xl-icon name="traycam"></xl-icon><xl-icon name="traynet"></xl-icon><xl-icon name="sound"></xl-icon>
			<span>ENG</span>
			<div class="clock">10:51 PM<br>10/06/2015</div>
		</div>
		<a class="mark" href="#">www.TheMentalClub.com</a>`;
	}
}

class ExcelDesktop extends XlElement {
	template() {
		return `<style>
			:host { display: grid; grid-template-rows: auto auto auto auto minmax(0, 1fr) auto auto auto; height: 100vh; margin: 0 3px; overflow: hidden; }
		</style>
		<title-bar></title-bar>
		<ribbon-tabs></ribbon-tabs>
		<ribbon-bar></ribbon-bar>
		<formula-bar></formula-bar>
		<sheet-grid></sheet-grid>
		<sheet-tabs></sheet-tabs>
		<status-bar></status-bar>
		<task-bar></task-bar>`;
	}
}

customElements.define("xl-icon", XlIcon);
customElements.define("title-bar", TitleBar);
customElements.define("ribbon-tabs", RibbonTabs);
customElements.define("ribbon-group", RibbonGroup);
customElements.define("big-button", BigButton);
customElements.define("tool-button", ToolButton);
customElements.define("drop-box", DropBox);
customElements.define("ribbon-bar", RibbonBar);
customElements.define("formula-bar", FormulaBar);
customElements.define("sheet-grid", SheetGrid);
customElements.define("sheet-tabs", SheetTabs);
customElements.define("status-bar", StatusBar);
customElements.define("task-bar", TaskBar);
customElements.define("excel-desktop", ExcelDesktop);
</script>
</body>
</html>
